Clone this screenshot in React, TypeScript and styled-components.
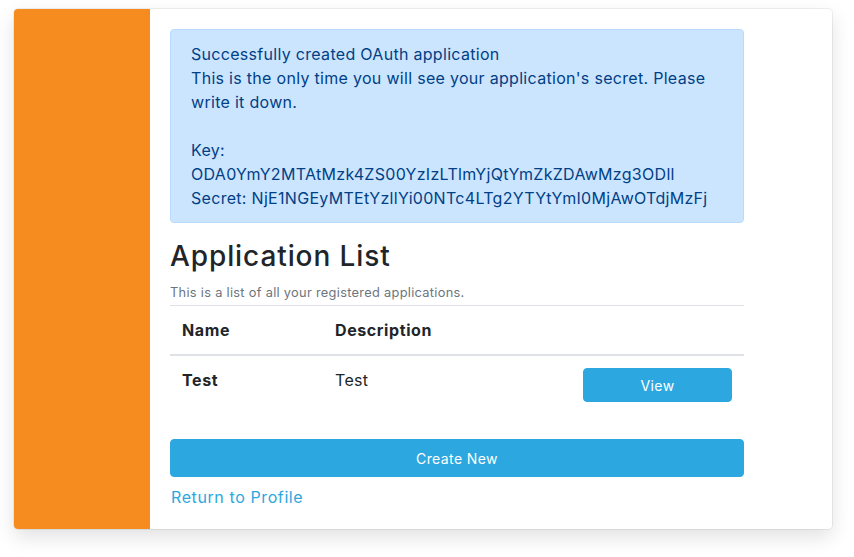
import React from 'react';
import styled, { createGlobalStyle } from 'styled-components';

const GlobalStyle = createGlobalStyle`
    * {
        box-sizing: border-box;
    }
    body {
        margin: 0;
        background-color: #ffffff;
        font-family: Inter, 'Noto Sans', sans-serif;
        letter-spacing: 0.3px;
        color: #212529;
    }
`;

const Page = styled.div`
    padding: 9px 22px 28px 14px;
`;

const Card = styled.div`
    display: flex;
    width: 818px;
    min-height: 520px;
    background-color: #ffffff;
    border-radius: 4px;
    overflow: hidden;
    box-shadow: 0 0 0 1px rgba(0, 0, 0, 0.06), 0 8px 20px rgba(0, 0, 0, 0.12);
`;

const Sidebar = styled.div`
    width: 136px;
    flex-shrink: 0;
    background-color: #f68b1f;
`;

const Content = styled.div`
    width: 594px;
    padding: 20px 0 20px 20px;
    display: flex;
    flex-direction: column;
`;

const Alert = styled.div`
    background-color: #cce5ff;
    border: 1px solid #b8daff;
    border-radius: 4px;
    color: #004085;
    padding: 12px 20px;
    font-size: 16px;
    line-height: 24px;
    margin-bottom: 16px;
`;

const Heading = styled.h3`
    margin: 0 0 8px;
    font-size: 28px;
    font-weight: 500;
    line-height: 34px;
    letter-spacing: 0.9px;
`;

const Lead = styled.p`
    margin: 0;
    font-size: 12.8px;
    line-height: 24px;
    color: #6c757d;
`;

const Table = styled.table`
    width: 100%;
    border-collapse: collapse;
    margin-bottom: 25px;
`;

const Th = styled.th<{ $width?: number }>`
    text-align: left;
    font-weight: 700;
    font-size: 16px;
    line-height: 24px;
    padding: 12px;
    letter-spacing: 0.6px;
    border-top: 1px solid #dee2e6;
    border-bottom: 2px solid #dee2e6;
    width: ${(p) => (p.$width ? `${p.$width}px` : 'auto')};
`;

const Td = styled.td<{ $bold?: boolean }>`
    vertical-align: top;
    font-size: 16px;
    line-height: 24px;
    padding: 12px;
    font-weight: ${(p) => (p.$bold ? 700 : 400)};
    letter-spacing: ${(p) => (p.$bold ? '0.6px' : '0.3px')};
`;

const Button = styled.button<{ $height: number }>`
    display: block;
    width: 100%;
    height: ${(p) => p.$height}px;
    background-color: #2ca7e0;
    border: 1px solid #2ca7e0;
    border-radius: 4px;
    color: #ffffff;
    font-family: inherit;
    font-size: 14px;
    letter-spacing: 0.4px;
    cursor: pointer;
`;

const Link = styled.a`
    margin-top: 8px;
    color: #2ca7e0;
    font-size: 16px;
    line-height: 24px;
    letter-spacing: 0.6px;
    text-decoration: none;
    align-self: flex-start;
    margin-left: 1px;
`;

const apps = [{ name: 'Test', description: 'Test' }];

export default function App() {
    return (
        <Page>
            <GlobalStyle />
            <Card>
                <Sidebar />
                <Content>
                    <Alert>
                        Successfully created OAuth application
                        <br />
                        This is the only time you will see your application's secret. Please write it down.
                        <br />
                        <br />
                        Key:
                        <br />
                        ODA0YmY2MTAtMzk4ZS00YzIzLTlmYjQtYmZkZDAwMzg3ODll
                        <br />
                        Secret: NjE1NGEyMTEtYzllYi00NTc4LTg2YTYtYmI0MjAwOTdjMzFj
                    </Alert>
                    <Heading>Application List</Heading>
                    <Lead>This is a list of all your registered applications.</Lead>
                    <Table>
                        <thead>
                            <tr>
                                <Th $width={153}>Name</Th>
                                <Th $width={248}>Description</Th>
                                <Th />
                            </tr>
                        </thead>
                        <tbody>
                            {apps.map((a) => (
                                <tr key={a.name}>
                                    <Td $bold>{a.name}</Td>
                                    <Td>{a.description}</Td>
                                    <Td>
                                        <Button $height={34}>View</Button>
                                    </Td>
                                </tr>
                            ))}
                        </tbody>
                    </Table>
                    <Button $height={38}>Create New</Button>
                    <Link href="#">Return to Profile</Link>
                </Content>
            </Card>
        </Page>
    );
}
